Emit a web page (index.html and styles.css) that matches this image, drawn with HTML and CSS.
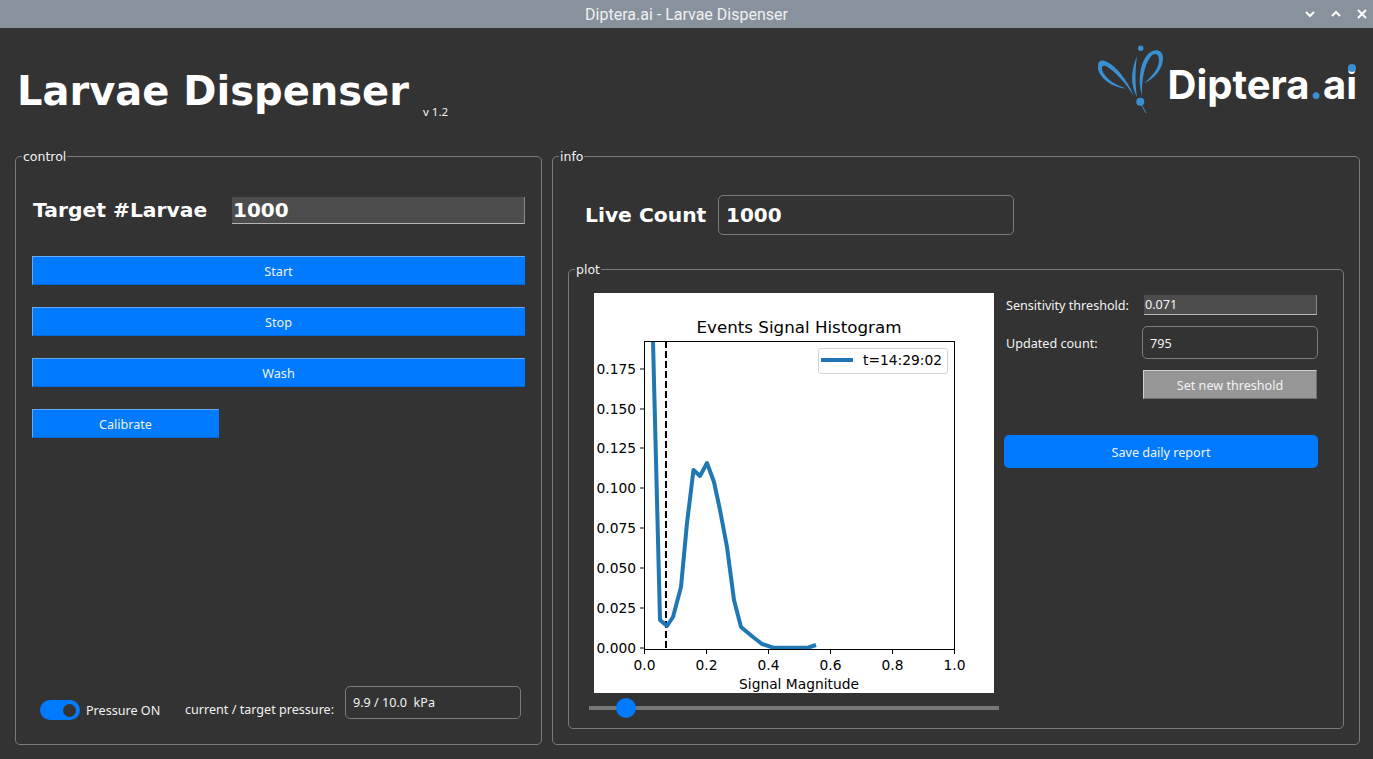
FILE: index.html
```html
<!DOCTYPE html>
<html lang="en">
<head>
    <meta charset="UTF-8">
    <meta name="viewport" content="width=device-width, initial-scale=1.0">
    <title>Diptera.ai - Larvae Dispenser</title>
    <link rel="stylesheet" href="styles.css">
</head>
<body>
    <div class="titlebar">
        <span class="titlebar-text">Diptera.ai - Larvae Dispenser</span>
        <div class="titlebar-icons">
            <svg width="12" height="12" viewBox="0 0 12 12"><path d="M2 4l4 4 4-4" fill="none" stroke="#fff" stroke-width="2"/></svg>
            <svg width="12" height="12" viewBox="0 0 12 12"><path d="M2 8l4-4 4 4" fill="none" stroke="#fff" stroke-width="2"/></svg>
            <svg width="12" height="12" viewBox="0 0 12 12"><path d="M2 2l8 8M10 2l-8 8" fill="none" stroke="#fff" stroke-width="2"/></svg>
        </div>
    </div>

    <header class="header">
        <h1 class="app-title">Larvae Dispenser</h1>
        <span class="version">v 1.2</span>
        <div class="logo">
            <svg class="logo-mark" width="68" height="70" viewBox="8 4 68 70">
                <g fill="#3a8fd0">
                    <path d="M44 56C37 40 27 26 15 21C9 19 7 24 8 29C10 38 22 48 37 48.5C26 46 15 38 12.5 31C11 26 13 25 16 26C26 32 36 44 44 56Z"/>
                    <path d="M52 56C48 42 49 24 58 14C64 8 73 9 73 18C73 29 65 38 54 43.5C61 37 69 29 69 20C69 13 64 12 60.5 17C54 25 51.5 42 52 56Z"/>
                    <path d="M47 16C41 30 40 45 47 57C45 45 45 30 47 16Z"/>
                    <circle cx="50.7" cy="8.3" r="2.7"/>
                    <circle cx="50.3" cy="61.7" r="4"/>
                </g>
                <path d="M51 64L56 73" fill="none" stroke="#3a8fd0" stroke-width="1"/>
            </svg>
            <span class="logo-text">Diptera<span class="logo-dot">.</span>a<span class="logo-i">i<span class="logo-tittle"></span></span></span>
        </div>
    </header>

    <main class="main">
        <fieldset class="group control">
            <legend>control</legend>
            <div class="target-row">
                <span class="big-label">Target #Larvae</span>
                <div class="edit-field big-value">1000</div>
            </div>
            <button class="btn">Start</button>
            <button class="btn">Stop</button>
            <button class="btn">Wash</button>
            <button class="btn btn-small">Calibrate</button>
            <div class="pressure-row">
                <span class="toggle"><span class="toggle-knob"></span></span>
                <span class="toggle-label">Pressure ON</span>
                <span class="pressure-label">current / target pressure:</span>
                <div class="readout pressure-value">9.9 / 10.0&nbsp; kPa</div>
            </div>
        </fieldset>

        <fieldset class="group info">
            <legend>info</legend>
            <div class="live-row">
                <span class="big-label">Live Count</span>
                <div class="readout live-value big-value">1000</div>
            </div>
            <fieldset class="group plot">
                <legend>plot</legend>
                <div class="plot-left">
                    <svg class="chart" width="400" height="400" viewBox="0 0 400 400">
                        <rect width="400" height="400" fill="#fff"/>
                        <text class="chart-title" x="205" y="40" text-anchor="middle">Events Signal Histogram</text>
                        <line x1="72" y1="48" x2="72" y2="355" stroke="#000" stroke-width="2" stroke-dasharray="7 3"/>
                        <polyline fill="none" stroke="#1f77b4" stroke-width="4" stroke-linejoin="round" points="59,48 66,327 73,333 79,324 87,294 93,230 99.5,177 106,183 113,170 120,189 126,217 133,254 140,307 147,334 159,344 168,351 179,354.7 214,354.7 222,352"/>
                        <rect x="50.5" y="48.5" width="310" height="308" fill="none" stroke="#000"/>
                        <g stroke="#000">
                            <path d="M50.5 357v4M112.5 357v4M174.5 357v4M236.5 357v4M298.5 357v4M360.5 357v4"/>
                            <path d="M46 355H50M46 315H50M46 275H50M46 235H50M46 195H50M46 155H50M46 116H50M46 76H50"/>
                        </g>
                        <g class="tick-labels" text-anchor="end">
                            <text x="42" y="360">0.000</text>
                            <text x="42" y="320">0.025</text>
                            <text x="42" y="280">0.050</text>
                            <text x="42" y="240">0.075</text>
                            <text x="42" y="200">0.100</text>
                            <text x="42" y="160">0.125</text>
                            <text x="42" y="121">0.150</text>
                            <text x="42" y="81">0.175</text>
                        </g>
                        <g class="tick-labels" text-anchor="middle">
                            <text x="50.5" y="377">0.0</text>
                            <text x="112.5" y="377">0.2</text>
                            <text x="174.5" y="377">0.4</text>
                            <text x="236.5" y="377">0.6</text>
                            <text x="298.5" y="377">0.8</text>
                            <text x="360.5" y="377">1.0</text>
                            <text x="205" y="396">Signal Magnitude</text>
                        </g>
                        <rect x="224.5" y="55.5" width="129" height="25" rx="2.5" fill="#fff" stroke="#d5d5d5"/>
                        <line x1="227" y1="67" x2="259" y2="67" stroke="#1f77b4" stroke-width="4"/>
                        <text class="tick-labels" x="269" y="72">t=14:29:02</text>
                    </svg>
                    <input class="slider" type="range" min="0" max="1" step="0.001" value="0.069">
                </div>
                <div class="plot-right">
                    <div class="threshold-row">
                        <span class="side-label">Sensitivity threshold:</span>
                        <div class="edit-field threshold-value">0.071</div>
                    </div>
                    <div class="count-row">
                        <span class="side-label">Updated count:</span>
                        <div class="readout count-value">795</div>
                    </div>
                    <button class="btn btn-grey">Set new threshold</button>
                    <button class="btn-save">Save daily report</button>
                </div>
            </fieldset>
        </fieldset>
    </main>
</body>
</html>
```

FILE: styles.css
```css
* {
    box-sizing: border-box;
}
html, body {
    height: 100%;
}
body {
    margin: 0;
    overflow: hidden;
    background-color: #333333;
    color: #f2f2f2;
    font-family: "Noto Sans", sans-serif;
    font-size: 12.6px;
    display: flex;
    flex-direction: column;
}
.titlebar {
    position: relative;
    flex: none;
    height: 28px;
    background-color: #88929d;
    display: flex;
    align-items: center;
    justify-content: center;
}
.titlebar-text {
    color: #eef0f2;
    font-family: Roboto, sans-serif;
    font-size: 16px;
}
.titlebar-icons {
    position: absolute;
    right: 5px;
    top: 8px;
    display: flex;
    gap: 14px;
}
.header {
    flex: none;
    height: 119px;
    padding: 0 16px 0 17px;
    display: flex;
    align-items: flex-start;
}
.app-title {
    margin: 36px 0 0;
    font-family: "DejaVu Sans", sans-serif;
    font-size: 40px;
    line-height: 54px;
    font-weight: bold;
    color: #ffffff;
}
.version {
    margin: 76px 0 0 14px;
    font-size: 11.6px;
}
.logo {
    margin: 16px 0 0 auto;
    display: flex;
    align-items: flex-start;
}
.logo-mark {
    margin-right: 2px;
}
.logo-text {
    margin-top: 16px;
    font-family: Inter, sans-serif;
    font-weight: 700;
    font-size: 40px;
    line-height: 50px;
    color: #ffffff;
}
.logo-dot {
    color: #3a8fd0;
}
.logo-i {
    position: relative;
}
.logo-tittle {
    position: absolute;
    left: 2px;
    top: 4px;
    width: 8px;
    height: 8px;
    border-radius: 50%;
    background-color: #3a8fd0;
}
.main {
    flex: 1;
    padding: 0 13px 14px 15px;
    display: flex;
    gap: 10px;
    min-height: 0;
}
.group {
    margin: 0;
    min-width: 0;
    border: 1px solid #7b7b7b;
    border-radius: 5px;
}
.group legend {
    padding: 2px 1px 0;
    font-family: "DejaVu Sans", sans-serif;
    font-size: 12.5px;
    line-height: 16px;
    color: #f2f2f2;
}
.control {
    width: 527px;
    padding: 32px 16px 25px 16px;
    display: flex;
    flex-direction: column;
}
.control legend {
    margin-left: -10px;
}
.info {
    flex: 1;
    padding: 30px 15px 15px 15px;
    display: flex;
    flex-direction: column;
}
.info > legend {
    margin-left: -9px;
}
.big-label {
    font-family: "DejaVu Sans", sans-serif;
    font-weight: bold;
    font-size: 20.3px;
    color: #ffffff;
}
.big-value {
    font-family: "DejaVu Sans", sans-serif;
    font-weight: bold;
    font-size: 20px;
    color: #ffffff;
}
.edit-field {
    background-color: #4d4d4d;
    border-bottom: 1px solid #b5b5b5;
    border-right: 1px solid #8a8a8a;
    padding-left: 1px;
    display: flex;
    align-items: center;
}
.readout {
    border: 1px solid #7b7b7b;
    border-radius: 5px;
    display: flex;
    align-items: center;
}
.target-row {
    height: 27px;
    margin-bottom: 32px;
    display: flex;
    align-items: center;
}
.target-row .big-label {
    width: 200px;
    padding: 0 0 2px 1px;
}
.target-row .edit-field {
    flex: 1;
    height: 27px;
}
.btn {
    height: 29px;
    margin-bottom: 22px;
    padding: 2px 0 0;
    color: #f2f2f2;
    font-family: "Noto Sans", sans-serif;
    font-size: 12.6px;
    background-color: #007bff;
    border-style: solid;
    border-width: 1px;
    border-color: #66aaf5 #007bff #0067d6 #66aaf5;
}
.btn-small {
    width: 187px;
}
.pressure-row {
    margin-top: auto;
    height: 33px;
    line-height: 18px;
    display: flex;
    align-items: flex-start;
}
.toggle {
    width: 40px;
    height: 20px;
    margin: 14px 0 0 8px;
    background-color: #007bff;
    border-radius: 10px;
    display: flex;
    align-items: center;
    justify-content: flex-end;
    padding-right: 4px;
}
.toggle-knob {
    width: 13px;
    height: 13px;
    border-radius: 50%;
    background-color: #333333;
}
.toggle-label {
    margin: 16px 0 0 6px;
    width: 99px;
}
.pressure-label {
    width: 160px;
    margin-top: 15px;
}
.pressure-value {
    width: 176px;
    height: 33px;
    padding-left: 7px;
}
.live-row {
    height: 40px;
    margin-bottom: 25px;
    display: flex;
    align-items: center;
}
.live-row .big-label {
    width: 150px;
    padding-left: 17px;
    white-space: nowrap;
}
.live-value {
    width: 296px;
    height: 40px;
    padding-left: 7px;
}
.plot {
    flex: 1;
    padding: 15px 25px 0 20px;
    display: flex;
    min-height: 0;
}
.plot > legend {
    margin-left: -14px;
}
.plot-left {
    width: 410px;
    display: flex;
    flex-direction: column;
    align-items: center;
}
.chart {
    display: block;
    flex: none;
}
.chart-title {
    font-family: "DejaVu Sans", sans-serif;
    font-size: 16.7px;
    fill: #000;
}
.tick-labels {
    font-family: "DejaVu Sans", sans-serif;
    font-size: 13.8px;
    fill: #000;
}
.slider {
    -webkit-appearance: none;
    appearance: none;
    width: 410px;
    height: 20px;
    margin: 5px 0 0;
    background: transparent;
}
.slider::-webkit-slider-runnable-track {
    height: 4px;
    background-color: #777777;
}
.slider::-webkit-slider-thumb {
    -webkit-appearance: none;
    width: 20px;
    height: 20px;
    margin-top: -8px;
    border-radius: 50%;
    background-color: #007bff;
}
.plot-right {
    flex: 1;
    margin-left: 5px;
    padding-top: 2px;
    display: flex;
    flex-direction: column;
}
.side-label {
    padding-left: 2px;
}
.threshold-row {
    height: 20px;
    margin-bottom: 11px;
    display: flex;
    align-items: center;
}
.threshold-row .side-label {
    width: 140px;
}
.threshold-value {
    width: 173px;
    height: 20px;
}
.count-row {
    height: 33px;
    margin-bottom: 11px;
    padding-top: 2px;
    display: flex;
    align-items: center;
}
.count-row .side-label {
    width: 138px;
}
.count-value {
    width: 176px;
    height: 33px;
    margin-top: -2px;
    padding: 2px 0 0 7px;
}
.btn-grey {
    width: 174px;
    margin-left: 139px;
    margin-bottom: 36px;
    background-color: #969696;
    border-color: #d0d0d0 #707070 #707070 #d0d0d0;
}
.btn-save {
    height: 33px;
    padding: 2px 0 0;
    border: none;
    border-radius: 5px;
    background-color: #007bff;
    color: #f2f2f2;
    font-family: "Noto Sans", sans-serif;
    font-size: 12.6px;
}
```
